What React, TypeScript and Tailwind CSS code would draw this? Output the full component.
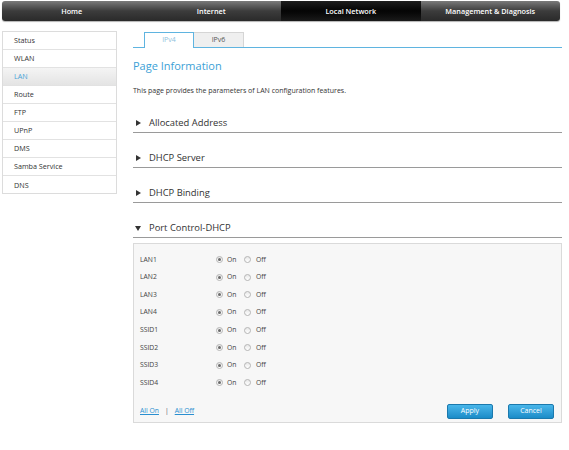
import React from "react";

const navItems = ["Home", "Internet", "Local Network", "Management & Diagnosis"];
const menuItems = ["Status", "WLAN", "LAN", "Route", "FTP", "UPnP", "DMS", "Samba Service", "DNS"];
const sections = ["Allocated Address", "DHCP Server", "DHCP Binding"];
const ports = ["LAN1", "LAN2", "LAN3", "LAN4", "SSID1", "SSID2", "SSID3", "SSID4"];

function Radio({ checked }: { checked?: boolean }) {
	return (
		<span className="inline-flex items-center justify-center w-[7px] h-[7px] rounded-full border border-[#b5b5b5] bg-gradient-to-b from-[#e8e8e8] to-white">
			{checked && <span className="w-[3px] h-[3px] rounded-full bg-[#6b6b6b]" />}
		</span>
	);
}

export default function App() {
	return (
		<div className="w-[569px] h-[450px] bg-white text-[#333] font-['Open_Sans',sans-serif]">
			{/* top nav */}
			<nav className="mx-[2px] mt-[1px] w-[558px] h-[20px] flex rounded-[3px] overflow-hidden bg-gradient-to-b from-[#7a7a7a] via-[#3c3c3c] to-[#2a2a2a] shadow-[0_1px_1px_rgba(0,0,0,0.3)]">
				{navItems.map((item) => (
					<div
						key={item}
						className={
							"flex-1 flex items-center justify-center text-[7.3px] font-semibold text-white " +
							(item === "Local Network" ? "bg-gradient-to-b from-[#1e1e1e] via-[#050505] to-[#1a1a1a]" : "")
						}
					>
						{item}
					</div>
				))}
			</nav>

			<div className="flex">
				{/* left menu */}
				<ul className="ml-[2px] mt-[10px] w-[115px] h-[163px] border border-[#dcdcdc]">
					{menuItems.map((item, i) => (
						<li
							key={item}
							className={
								"h-[18px] flex items-center pl-[11px] text-[7.2px] " +
								(i < menuItems.length - 1 ? "border-b border-[#e2e2e2] " : "") +
								(item === "LAN" ? "bg-gradient-to-b from-[#f4f4f4] to-[#e4e4e4] text-[#4aa3d8]" : "text-[#333]")
							}
						>
							{item}
						</li>
					))}
				</ul>

				{/* main content */}
				<main className="ml-[16px] mt-[11px] w-[429px]">
					{/* tabs */}
					<div className="flex h-[16px] border-b border-[#5fb4e0] pl-[11px]">
						<div className="w-[50px] h-[16px] flex items-center justify-center text-[7px] text-[#8fbfdc] bg-white border border-b-0 border-[#5fb4e0]">
							IPv4
						</div>
						<div className="w-[50px] h-[15px] flex items-center justify-center text-[7px] text-[#555] bg-[#efefef] border border-l-0 border-b-0 border-[#d5d5d5]">
							IPv6
						</div>
					</div>

					<h1 className="mt-[11px] text-[11px] leading-[14px] text-[#3c9fd6]">Page Information</h1>
					<p className="mt-[13px] text-[7px] leading-[9px] text-[#333]">
						This page provides the parameters of LAN configuration features.
					</p>

					<div className="mt-[3px]">
						{sections.map((s) => (
							<div key={s} className="h-[35px] flex flex-col justify-end">
								<div className="flex items-center h-[14px] text-[9.4px] text-[#333]">
									<span className="w-0 h-0 ml-[3px] mr-[8px] border-y-[3px] border-y-transparent border-l-[5px] border-l-[#333]" />
									{s}
								</div>
								<div className="mt-[2px] border-b border-[#9a9a9a]" />
							</div>
						))}
						<div className="h-[35px] flex flex-col justify-end">
							<div className="flex items-center h-[14px] text-[9.4px] text-[#333]">
								<span className="w-0 h-0 ml-[2px] mr-[8px] border-x-[3px] border-x-transparent border-t-[5px] border-t-[#333]" />
								Port Control-DHCP
							</div>
							<div className="mt-[2px] border-b border-[#9a9a9a]" />
						</div>
					</div>

					{/* port control panel */}
					<div className="mt-[5px] h-[180px] bg-[#f7f7f7] border border-[#dadada] pl-[6px] pr-[7px] pt-[7px]">
						{ports.map((p) => (
							<div key={p} className="h-[17.6px] flex items-center text-[6.8px] text-[#444]">
								<span className="w-[76px]">{p}</span>
								<Radio checked />
								<span className="ml-[4px] w-[17px]">On</span>
								<Radio />
								<span className="ml-[5px]">Off</span>
							</div>
						))}
						<div className="mt-[12px] flex items-center justify-between">
							<div className="flex items-center text-[6.8px] text-[#2a8fd0]">
								<a className="underline">All On</a>
								<span className="mx-[6px] text-[#555]">|</span>
								<a className="underline">All Off</a>
							</div>
							<div className="flex gap-[15px]">
								<button className="w-[46px] h-[15px] rounded-[2px] border border-[#1b79ad] bg-gradient-to-b from-[#48b6ea] to-[#1a8cc8] text-white text-[7px]">
									Apply
								</button>
								<button className="w-[46px] h-[15px] rounded-[2px] border border-[#1b79ad] bg-gradient-to-b from-[#48b6ea] to-[#1a8cc8] text-white text-[7px]">
									Cancel
								</button>
							</div>
						</div>
					</div>
				</main>
			</div>
		</div>
	);
}
